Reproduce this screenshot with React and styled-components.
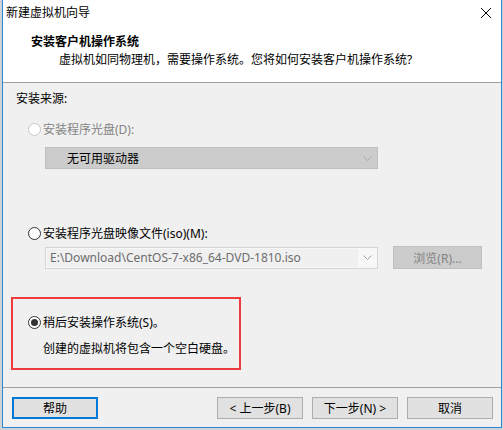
import React from 'react';
import styled, { createGlobalStyle } from 'styled-components';

const GlobalStyle = createGlobalStyle`
  html, body {
    margin: 0;
    padding: 0;
    background: #cfd3d6;
  }
  body {
    font-family: "Noto Sans", "Noto Sans CJK SC", sans-serif;
    font-size: 12px;
    color: #000;
  }
`;

const Window = styled.div`
  margin-left: 2px;
  width: 500px;
  height: 428px;
  box-sizing: border-box;
  border: 1px solid #2b86d6;
  border-top: none;
  background: #f0f0f0;
  display: flex;
  flex-direction: column;
  overflow: hidden;
`;

const TitleBar = styled.div`
  height: 30px;
  flex: none;
  background: #fff;
  display: flex;
  align-items: center;
  justify-content: space-between;
  padding: 0 10px 4px 3px;
  box-sizing: border-box;
`;

const TitleText = styled.span`
  line-height: 16px;
`;

const Header = styled.div`
  height: 53px;
  flex: none;
  box-sizing: border-box;
  background: #fff;
  border-bottom: 1px solid #a0a0a0;
  padding: 4px 0 0 28px;
`;

const HeaderTitle = styled.div`
  font-weight: bold;
  line-height: 16px;
`;

const HeaderSub = styled.div`
  line-height: 16px;
  margin: 2px 0 0 28px;
`;

const Body = styled.div`
  flex: 1;
  padding: 8px 0 0 13px;
`;

const SectionLabel = styled.div`
  line-height: 16px;
`;

const RadioRow = styled.label`
  display: flex;
  align-items: center;
  gap: 2px;
  height: 16px;
  margin: ${p => p.$mt || 0}px 0 0 ${p => p.$ml ?? 12}px;
  color: ${p => (p.$disabled ? '#838383' : '#000')};
`;

const RadioDot = styled.span`
  width: 13px;
  height: 13px;
  box-sizing: border-box;
  border-radius: 50%;
  border: 1px solid ${p => (p.$disabled ? '#c6c6c6' : '#333')};
  background: #fff;
  display: flex;
  align-items: center;
  justify-content: center;

  &::after {
    content: '';
    width: 7px;
    height: 7px;
    border-radius: 50%;
    background: #333;
    display: ${p => (p.$checked ? 'block' : 'none')};
  }
`;

const Combo = styled.div`
  width: 333px;
  height: 22px;
  box-sizing: border-box;
  display: flex;
  align-items: stretch;
  margin: ${p => p.$mt || 0}px 0 0 ${p => p.$ml || 0}px;
  background: ${p => (p.$disabled ? '#cccccc' : '#f7f7f7')};
  border: 1px solid ${p => (p.$disabled ? '#bfbfbf' : '#d5d5d5')};
`;

const ComboText = styled.div`
  flex: 1;
  display: flex;
  align-items: center;
  padding-left: ${p => p.$pad}px;
  margin: ${p => (p.$field ? '1px 0 1px 1px' : '0')};
  background: ${p => (p.$field ? '#f0f0f0' : 'transparent')};
  color: ${p => p.$color};
  white-space: nowrap;
`;

const ComboArrow = styled.div`
  width: 19px;
  display: flex;
  align-items: center;
  justify-content: center;
`;

const FileRow = styled.div`
  display: flex;
  align-items: center;
  margin: 5px 0 0 29px;
  height: 23px;
`;

const GrayButton = styled.div`
  width: 89px;
  height: 23px;
  box-sizing: border-box;
  margin-left: 15px;
  background: #cccccc;
  border: 1px solid #bfbfbf;
  color: #838383;
  display: flex;
  align-items: center;
  justify-content: center;
`;

const Highlight = styled.div`
  width: 230px;
  height: 73px;
  box-sizing: border-box;
  margin: 28px 0 0 -5px;
  border: 2px solid #ef3b3b;
  padding: 15px 0 0 15px;
`;

const Note = styled.div`
  line-height: 16px;
  margin: 11px 0 0 15px;
`;

const Footer = styled.div`
  height: 40px;
  flex: none;
  box-sizing: border-box;
  border-top: 1px solid #a0a0a0;
  padding: 9px 8px 0 9px;
  display: flex;
  align-items: flex-start;
  gap: 9px;
`;

const Spacer = styled.div`
  flex: 1;
`;

const Button = styled.div`
  width: 86px;
  height: 22px;
  box-sizing: border-box;
  background: #e1e1e1;
  border: ${p => (p.$default ? '2px solid #0078d7' : '1px solid #adadad')};
  display: flex;
  align-items: center;
  justify-content: center;
  white-space: nowrap;
`;

const Chevron = ({ color }) => (
  <svg width="9" height="5" viewBox="0 0 9 5">
    <path d="M0.5 0.5 L4.5 4.5 L8.5 0.5" fill="none" stroke={color} strokeWidth="1" />
  </svg>
);

const CloseIcon = () => (
  <svg width="10" height="10" viewBox="0 0 10 10">
    <path d="M0 0 L10 10 M10 0 L0 10" stroke="#000" strokeWidth="1" />
  </svg>
);

export default function App() {
  return (
    <>
      <GlobalStyle />
      <Window>
        <TitleBar>
          <TitleText>新建虚拟机向导</TitleText>
          <CloseIcon />
        </TitleBar>
        <Header>
          <HeaderTitle>安装客户机操作系统</HeaderTitle>
          <HeaderSub>虚拟机如同物理机，需要操作系统。您将如何安装客户机操作系统?</HeaderSub>
        </Header>
        <Body>
          <SectionLabel>安装来源:</SectionLabel>
          <RadioRow $mt={14} $disabled>
            <RadioDot $disabled />
            安装程序光盘(D):
          </RadioRow>
          <Combo $mt={10} $ml={29} $disabled>
            <ComboText $pad={21} $color="#000">无可用驱动器</ComboText>
            <ComboArrow>
              <Chevron color="#a8a8a8" />
            </ComboArrow>
          </Combo>
          <RadioRow $mt={56}>
            <RadioDot />
            安装程序光盘映像文件(iso)(M):
          </RadioRow>
          <FileRow>
            <Combo>
              <ComboText $field $pad={3} $color="#6d6d6d">
                E:\Download\CentOS-7-x86_64-DVD-1810.iso
              </ComboText>
              <ComboArrow>
                <Chevron color="#a0a0a0" />
              </ComboArrow>
            </Combo>
            <GrayButton>浏览(R)...</GrayButton>
          </FileRow>
          <Highlight>
            <RadioRow $ml={0}>
              <RadioDot $checked />
              稍后安装操作系统(S)。
            </RadioRow>
            <Note>创建的虚拟机将包含一个空白硬盘。</Note>
          </Highlight>
        </Body>
        <Footer>
          <Button $default>帮助</Button>
          <Spacer />
          <Button>&lt; 上一步(B)</Button>
          <Button>下一步(N) &gt;</Button>
          <Button>取消</Button>
        </Footer>
      </Window>
    </>
  );
}
